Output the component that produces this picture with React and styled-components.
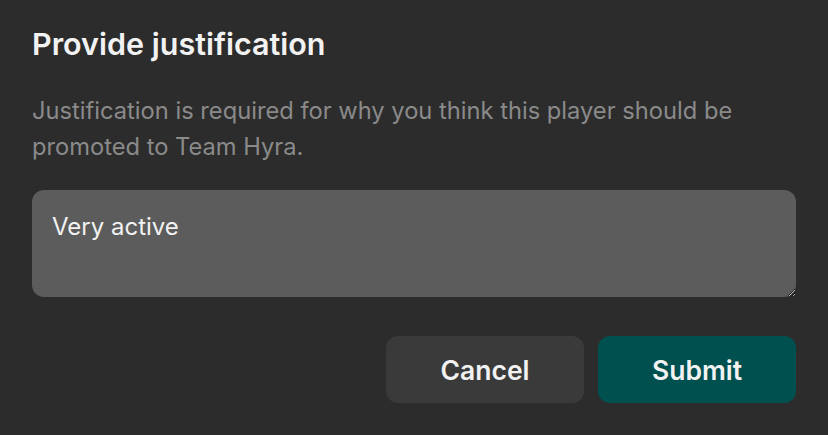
import React, { useState } from "react";
import styled, { createGlobalStyle } from "styled-components";

const GlobalStyle = createGlobalStyle`
  html, body {
    margin: 0;
    padding: 0;
    background: #2c2c2c;
  }
  * {
    box-sizing: border-box;
  }
`;

const Dialog = styled.div`
  width: 828px;
  height: 435px;
  padding: 22px 32px 32px;
  background: #2c2c2c;
  font-family: Inter, "Noto Sans", sans-serif;
  display: flex;
  flex-direction: column;
`;

const Title = styled.h2`
  margin: 0;
  font-size: 30.5px;
  font-weight: 600;
  line-height: 44px;
  color: #f2f2f2;
`;

const Description = styled.p`
  margin: 27px 0 0;
  font-size: 23.7px;
  line-height: 36px;
  color: #8a8a8a;
  max-width: 740px;
`;

const TextArea = styled.textarea`
  margin-top: 25px;
  width: 100%;
  height: 107px;
  padding: 22px 20px 18px;
  border: none;
  border-radius: 12px;
  background: #5c5c5c;
  color: #f2f2f2;
  font-family: inherit;
  font-size: 24px;
  line-height: 30px;
  outline: none;
  resize: vertical;
`;

const Actions = styled.div`
  display: flex;
  justify-content: flex-end;
  gap: 14px;
  margin-top: 39px;
`;

const Button = styled.button`
  width: 198px;
  height: 67px;
  border: none;
  border-radius: 12px;
  background: ${(p) => (p.$primary ? "#005050" : "#3a3a3a")};
  color: #f2f2f2;
  font-family: inherit;
  font-size: 26.5px;
  font-weight: 600;
  cursor: pointer;
`;

const App = () => {
  const [text, setText] = useState("Very active");

  return (
    <>
      <GlobalStyle />
      <Dialog>
        <Title>Provide justification</Title>
        <Description>
          Justification is required for why you think this player should be
          promoted to Team Hyra.
        </Description>
        <TextArea value={text} onChange={(e) => setText(e.target.value)} />
        <Actions>
          <Button>Cancel</Button>
          <Button $primary>Submit</Button>
        </Actions>
      </Dialog>
    </>
  );
};

export default App;
